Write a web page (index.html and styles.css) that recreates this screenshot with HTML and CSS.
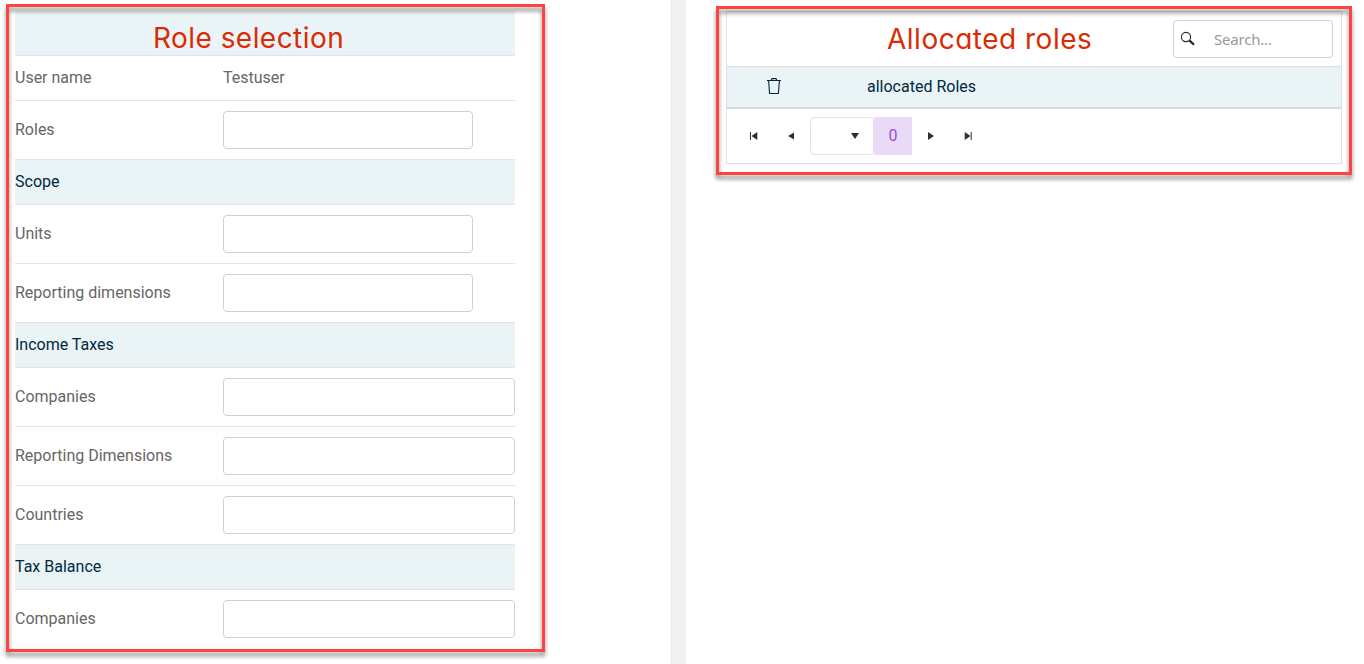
FILE: index.html
```html
<!DOCTYPE html>
<html lang="en">
<head>
<meta charset="utf-8">
<title>Role selection</title>
<link rel="stylesheet" href="styles.css">
</head>
<body>
<main class="split">
  <section class="pane pane-left">
    <div class="form">
      <div class="row section title-row"><h1 class="title title-selection">Role selection</h1></div>
      <div class="row"><span class="label">User name</span><span>Testuser</span></div>
      <div class="row field"><label class="label" for="roles">Roles</label><input id="roles" class="input"></div>
      <div class="row section">Scope</div>
      <div class="row field"><label class="label" for="units">Units</label><input id="units" class="input"></div>
      <div class="row field"><label class="label" for="dims">Reporting dimensions</label><input id="dims" class="input"></div>
      <div class="row section">Income Taxes</div>
      <div class="row field"><label class="label" for="inc-comp">Companies</label><input id="inc-comp" class="input wide"></div>
      <div class="row field"><label class="label" for="inc-dims">Reporting Dimensions</label><input id="inc-dims" class="input wide"></div>
      <div class="row field"><label class="label" for="countries">Countries</label><input id="countries" class="input wide"></div>
      <div class="row section">Tax Balance</div>
      <div class="row field last"><label class="label" for="tax-comp">Companies</label><input id="tax-comp" class="input wide"></div>
    </div>
    <div class="frame"></div>
  </section>
  <div class="splitter"></div>
  <section class="pane pane-right">
    <div class="grid">
      <div class="toolbar">
        <h1 class="title title-allocated">Allocated roles</h1>
        <div class="search">
          <svg class="search-icon" width="16" height="16" viewBox="0 0 16 16"><circle cx="6" cy="6" r="4.6" fill="none" stroke="#212529" stroke-width="1.1"/><path d="M9.6 9.6L14 13.8" stroke="#212529" stroke-width="2.2"/></svg>
          <input class="search-input" placeholder="Search...">
        </div>
      </div>
      <div class="grid-head">
        <svg class="trash" width="14" height="17" viewBox="0 0 14 17"><path d="M0 2.5H14M4 2.5L5 .6H9L10 2.5M1.6 2.5L2.6 15.5H11.4L12.4 2.5" fill="none" stroke="#00293f" stroke-width="1.1"/></svg>
        <span>allocated Roles</span>
      </div>
      <div class="pager">
        <button class="nav" aria-label="First"><svg width="8" height="8" viewBox="0 0 8 8"><path d="M0 0H1V8H0ZM7.3 0V8L1.5 4Z"/></svg></button>
        <button class="nav" aria-label="Previous"><svg width="8" height="8" viewBox="0 0 8 8"><path d="M7 .5V7.5L1 4Z"/></svg></button>
        <div class="page-size"><svg width="8" height="6" viewBox="0 0 8 6"><path d="M0 0H8L4 6Z"/></svg></div>
        <div class="page-current">0</div>
        <button class="nav" aria-label="Next"><svg width="8" height="8" viewBox="0 0 8 8"><path d="M1 0V8L7 4Z"/></svg></button>
        <button class="nav nav-last" aria-label="Last"><svg width="8" height="8" viewBox="0 0 8 8"><path d="M6.7 0H7.7V8H6.7ZM.7 0V8L6.5 4Z"/></svg></button>
      </div>
    </div>
    <div class="frame"></div>
  </section>
</main>
</body>
</html>
```
FILE: styles.css
```css
* { box-sizing: border-box; }
body {
  margin: 0;
  height: 664px;
  overflow: hidden;
  background: #fff;
  color: #666;
  font: 16px/24px Roboto, sans-serif;
}
.split { display: flex; height: 664px; }
.pane { position: relative; }
.pane-left { width: 671px; padding: 11px 0 0 15px; }
.pane-right { flex: 1; padding: 11px 0 0 40px; }
.splitter { width: 15px; background: #f1f1f1; border-left: 1px solid #ebebeb; }
.form { width: 500px; }
.row {
  display: flex;
  align-items: center;
  height: 45px;
  border-bottom: 1px solid #e3e4e6;
}
.row.field { height: 59px; }
.row.last { border-bottom-color: transparent; }
.section { background: #eaf3f6; color: #00293f; }
.label { width: 208px; }
.input {
  width: 250px;
  height: 38px;
  padding: 6px 12px;
  border: 1px solid #ced1d9;
  border-radius: 4px;
  background: #fff;
}
.input.wide { width: 292px; }
.title {
  margin: 0;
  color: #d92b04;
  font: 400 28px/36px Inter, sans-serif;
  font-feature-settings: "cv11";
  white-space: nowrap;
}
.title-row { padding: 10px 0 0 138px; }
.title-selection { letter-spacing: .45px; }
.title-allocated { letter-spacing: .5px; }

/* Red highlight outlines lying over each panel */
.frame {
  position: absolute;
  pointer-events: none;
  border: 3px solid #ff4343;
  filter: drop-shadow(0 4px 2px rgba(0, 0, 0, .48));
}
.pane-left .frame { left: 6px; top: 4px; width: 539px; height: 648px; }
.pane-right .frame { left: 30px; top: 6px; width: 636px; height: 169px; }

.grid { width: 616px; height: 153px; border: 1px solid #e0e0e3; }
.toolbar {
  display: flex;
  align-items: center;
  justify-content: space-between;
  height: 55px;
  padding: 0 8px 0 160px;
  border-bottom: 1px solid #e0e0e3;
}
.search {
  display: flex;
  align-items: center;
  width: 160px;
  height: 38px;
  padding-left: 6px;
  border: 1px solid #ced1d9;
  border-radius: 4px;
}
.search-input {
  width: 110px;
  margin-left: 18px;
  padding: 0;
  border: 0;
  outline: 0;
  font: 15px/24px "Noto Sans", sans-serif;
  letter-spacing: -.2px;
}
.search-input::placeholder { color: #999; }
.grid-head {
  display: flex;
  align-items: center;
  height: 42px;
  padding-left: 40px;
  border-bottom: 2px solid #d5dbde;
  background: #eaf3f6;
  color: #00293f;
}
.trash { margin: 0 86px 2px 0; }
.pager { display: flex; align-items: center; height: 54px; padding-left: 8px; }
.nav {
  display: flex;
  align-items: center;
  justify-content: center;
  width: 37.5px;
  height: 38px;
  padding: 0;
  border: 0;
  background: none;
}
.nav-last { width: 36px; }
.pager svg { fill: #2f2f2f; }
.page-size {
  display: flex;
  align-items: center;
  justify-content: flex-end;
  width: 64px;
  height: 38px;
  padding-right: 14px;
  border: 1px solid #e3e4e6;
  border-radius: 4px;
}
.page-current {
  width: 38px;
  height: 38px;
  background: #e9daf8;
  color: #9a4ddd;
  line-height: 38px;
  text-align: center;
}
```
